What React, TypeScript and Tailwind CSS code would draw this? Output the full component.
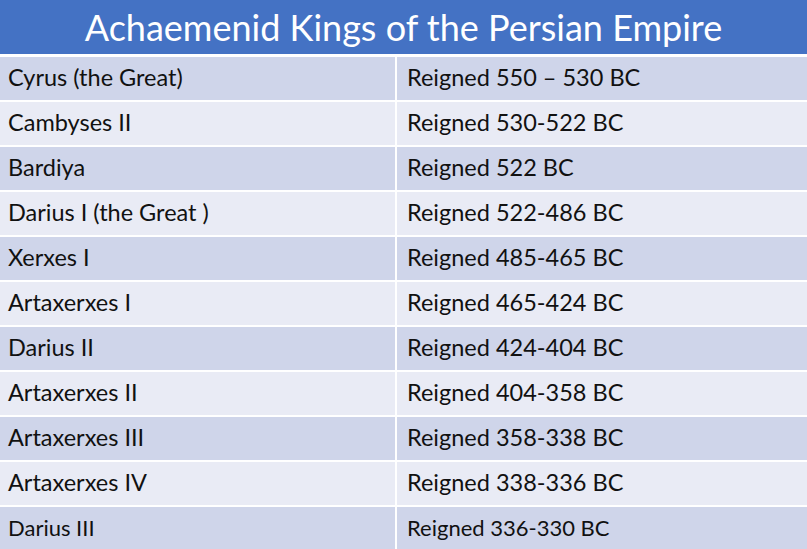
import React from 'react';

const kings: [string, string][] = [
  ['Cyrus (the Great)', 'Reigned 550 – 530 BC'],
  ['Cambyses II', 'Reigned 530-522 BC'],
  ['Bardiya', 'Reigned 522 BC'],
  ['Darius I (the Great )', 'Reigned 522-486 BC'],
  ['Xerxes I', 'Reigned 485-465 BC'],
  ['Artaxerxes I', 'Reigned 465-424 BC'],
  ['Darius II', 'Reigned 424-404 BC'],
  ['Artaxerxes II', 'Reigned 404-358 BC'],
  ['Artaxerxes III', 'Reigned 358-338 BC'],
  ['Artaxerxes IV', 'Reigned 338-336 BC'],
  ['Darius III', 'Reigned 336-330 BC'],
];

const App: React.FC = () => {
  return (
    <div className="w-[807px] h-[549px] overflow-hidden bg-white flex flex-col font-['Lato',sans-serif] text-[#111]">
      <div className="h-[54px] shrink-0 bg-[#4472c4] flex items-center justify-center">
        <h1 className="text-white text-[36px] leading-none">Achaemenid Kings of the Persian Empire</h1>
      </div>
      <div className="mt-[3px] flex flex-col gap-y-[2px]">
        {kings.map(([name, reign], i) => {
          const bg = i % 2 === 0 ? 'bg-[#cfd5ea]' : 'bg-[#e9ebf5]';
          const size = i === kings.length - 1 ? 'text-[22px]' : 'text-[23.5px]';
          return (
            <div key={name} className="grid grid-cols-[395px_1fr] gap-x-[2px] h-[43px]">
              <div className={`${bg} ${size} flex items-center pl-[8px] pb-[2px]`}>{name}</div>
              <div className={`${bg} ${size} flex items-center pl-[10px] pb-[2px]`}>{reign}</div>
            </div>
          );
        })}
      </div>
    </div>
  );
};

export default App;
